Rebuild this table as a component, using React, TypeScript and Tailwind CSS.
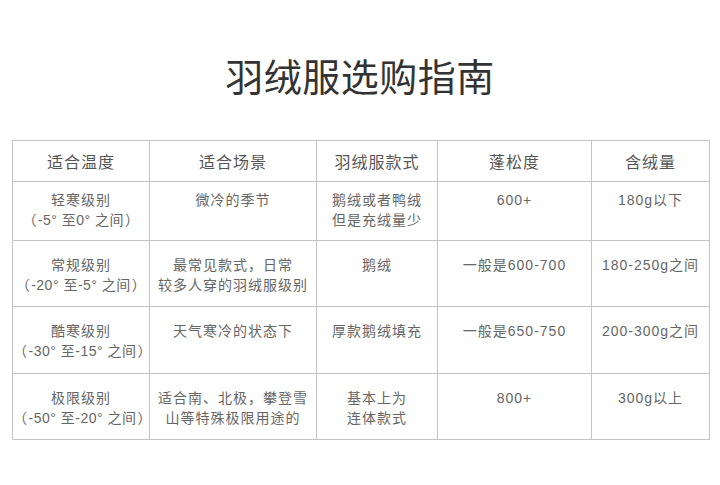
const font = '[font-family:"Liberation_Sans","Noto_Sans_CJK_SC",sans-serif]';

interface Row {
  level: string;
  range: string;
  scene: string[];
  style: string[];
  fill: string;
  weight: string;
  height: string;
  pad: string;
}

const headers = ['适合温度', '适合场景', '羽绒服款式', '蓬松度', '含绒量'];

const rows: Row[] = [
  {
    level: '轻寒级别',
    range: '-5° 至0° 之间',
    scene: ['微冷的季节'],
    style: ['鹅绒或者鸭绒', '但是充绒量少'],
    fill: '600+',
    weight: '180g以下',
    height: 'h-[59px]',
    pad: 'pt-[8px]',
  },
  {
    level: '常规级别',
    range: '-20° 至-5° 之间',
    scene: ['最常见款式，日常', '较多人穿的羽绒服级别'],
    style: ['鹅绒'],
    fill: '一般是600-700',
    weight: '180-250g之间',
    height: 'h-[66px]',
    pad: 'pt-[14px]',
  },
  {
    level: '酷寒级别',
    range: '-30° 至-15° 之间',
    scene: ['天气寒冷的状态下'],
    style: ['厚款鹅绒填充'],
    fill: '一般是650-750',
    weight: '200-300g之间',
    height: 'h-[67px]',
    pad: 'pt-[14px]',
  },
  {
    level: '极限级别',
    range: '-50° 至-20° 之间',
    scene: ['适合南、北极，攀登雪', '山等特殊极限用途的'],
    style: ['基本上为', '连体款式'],
    fill: '800+',
    weight: '300g以上',
    height: 'h-[66px]',
    pad: 'pt-[14px]',
  },
];

function Lines({ lines }: { lines: string[] }) {
  return (
    <>
      {lines.map((l) => (
        <div key={l} className="whitespace-nowrap">
          {l}
        </div>
      ))}
    </>
  );
}

export default function App() {
  const cell = 'border border-[#c4c4c4] align-top text-center px-0';
  return (
    <div className={`w-[720px] h-[485px] bg-white ${font}`}>
      <h1 className="pt-[48px] h-[140px] text-center text-[38px] leading-[54px] text-[#333] tracking-[0.5px] [font-family:'Noto_Sans_CJK_SC',sans-serif]">
        羽绒服选购指南
      </h1>
      <table className="ml-[12px] w-[697px] border-collapse table-fixed text-[14px] leading-[20px] tracking-[1px] text-[#666]">
        <colgroup>
          <col className="w-[137px]" />
          <col className="w-[167px]" />
          <col className="w-[121px]" />
          <col className="w-[154px]" />
          <col className="w-[118px]" />
        </colgroup>
        <thead>
          <tr className="h-[41px]">
            {headers.map((h) => (
              <th key={h} className={`${cell} pt-[12px] font-normal text-[16px] text-[#555]`}>
                {h}
              </th>
            ))}
          </tr>
        </thead>
        <tbody>
          {rows.map((r) => (
            <tr key={r.level} className={r.height}>
              <td className={`${cell} ${r.pad}`}>
                <div>{r.level}</div>
                <div className="whitespace-nowrap tracking-[0.5px]">
                  <span className="pr-[1px]">（</span>
                  {r.range}
                  <span className="pl-[1px]">）</span>
                </div>
              </td>
              <td className={`${cell} ${r.pad}`}>
                <Lines lines={r.scene} />
              </td>
              <td className={`${cell} ${r.pad}`}>
                <Lines lines={r.style} />
              </td>
              <td className={`${cell} ${r.pad}`}>{r.fill}</td>
              <td className={`${cell} ${r.pad}`}>{r.weight}</td>
            </tr>
          ))}
        </tbody>
      </table>
    </div>
  );
}
